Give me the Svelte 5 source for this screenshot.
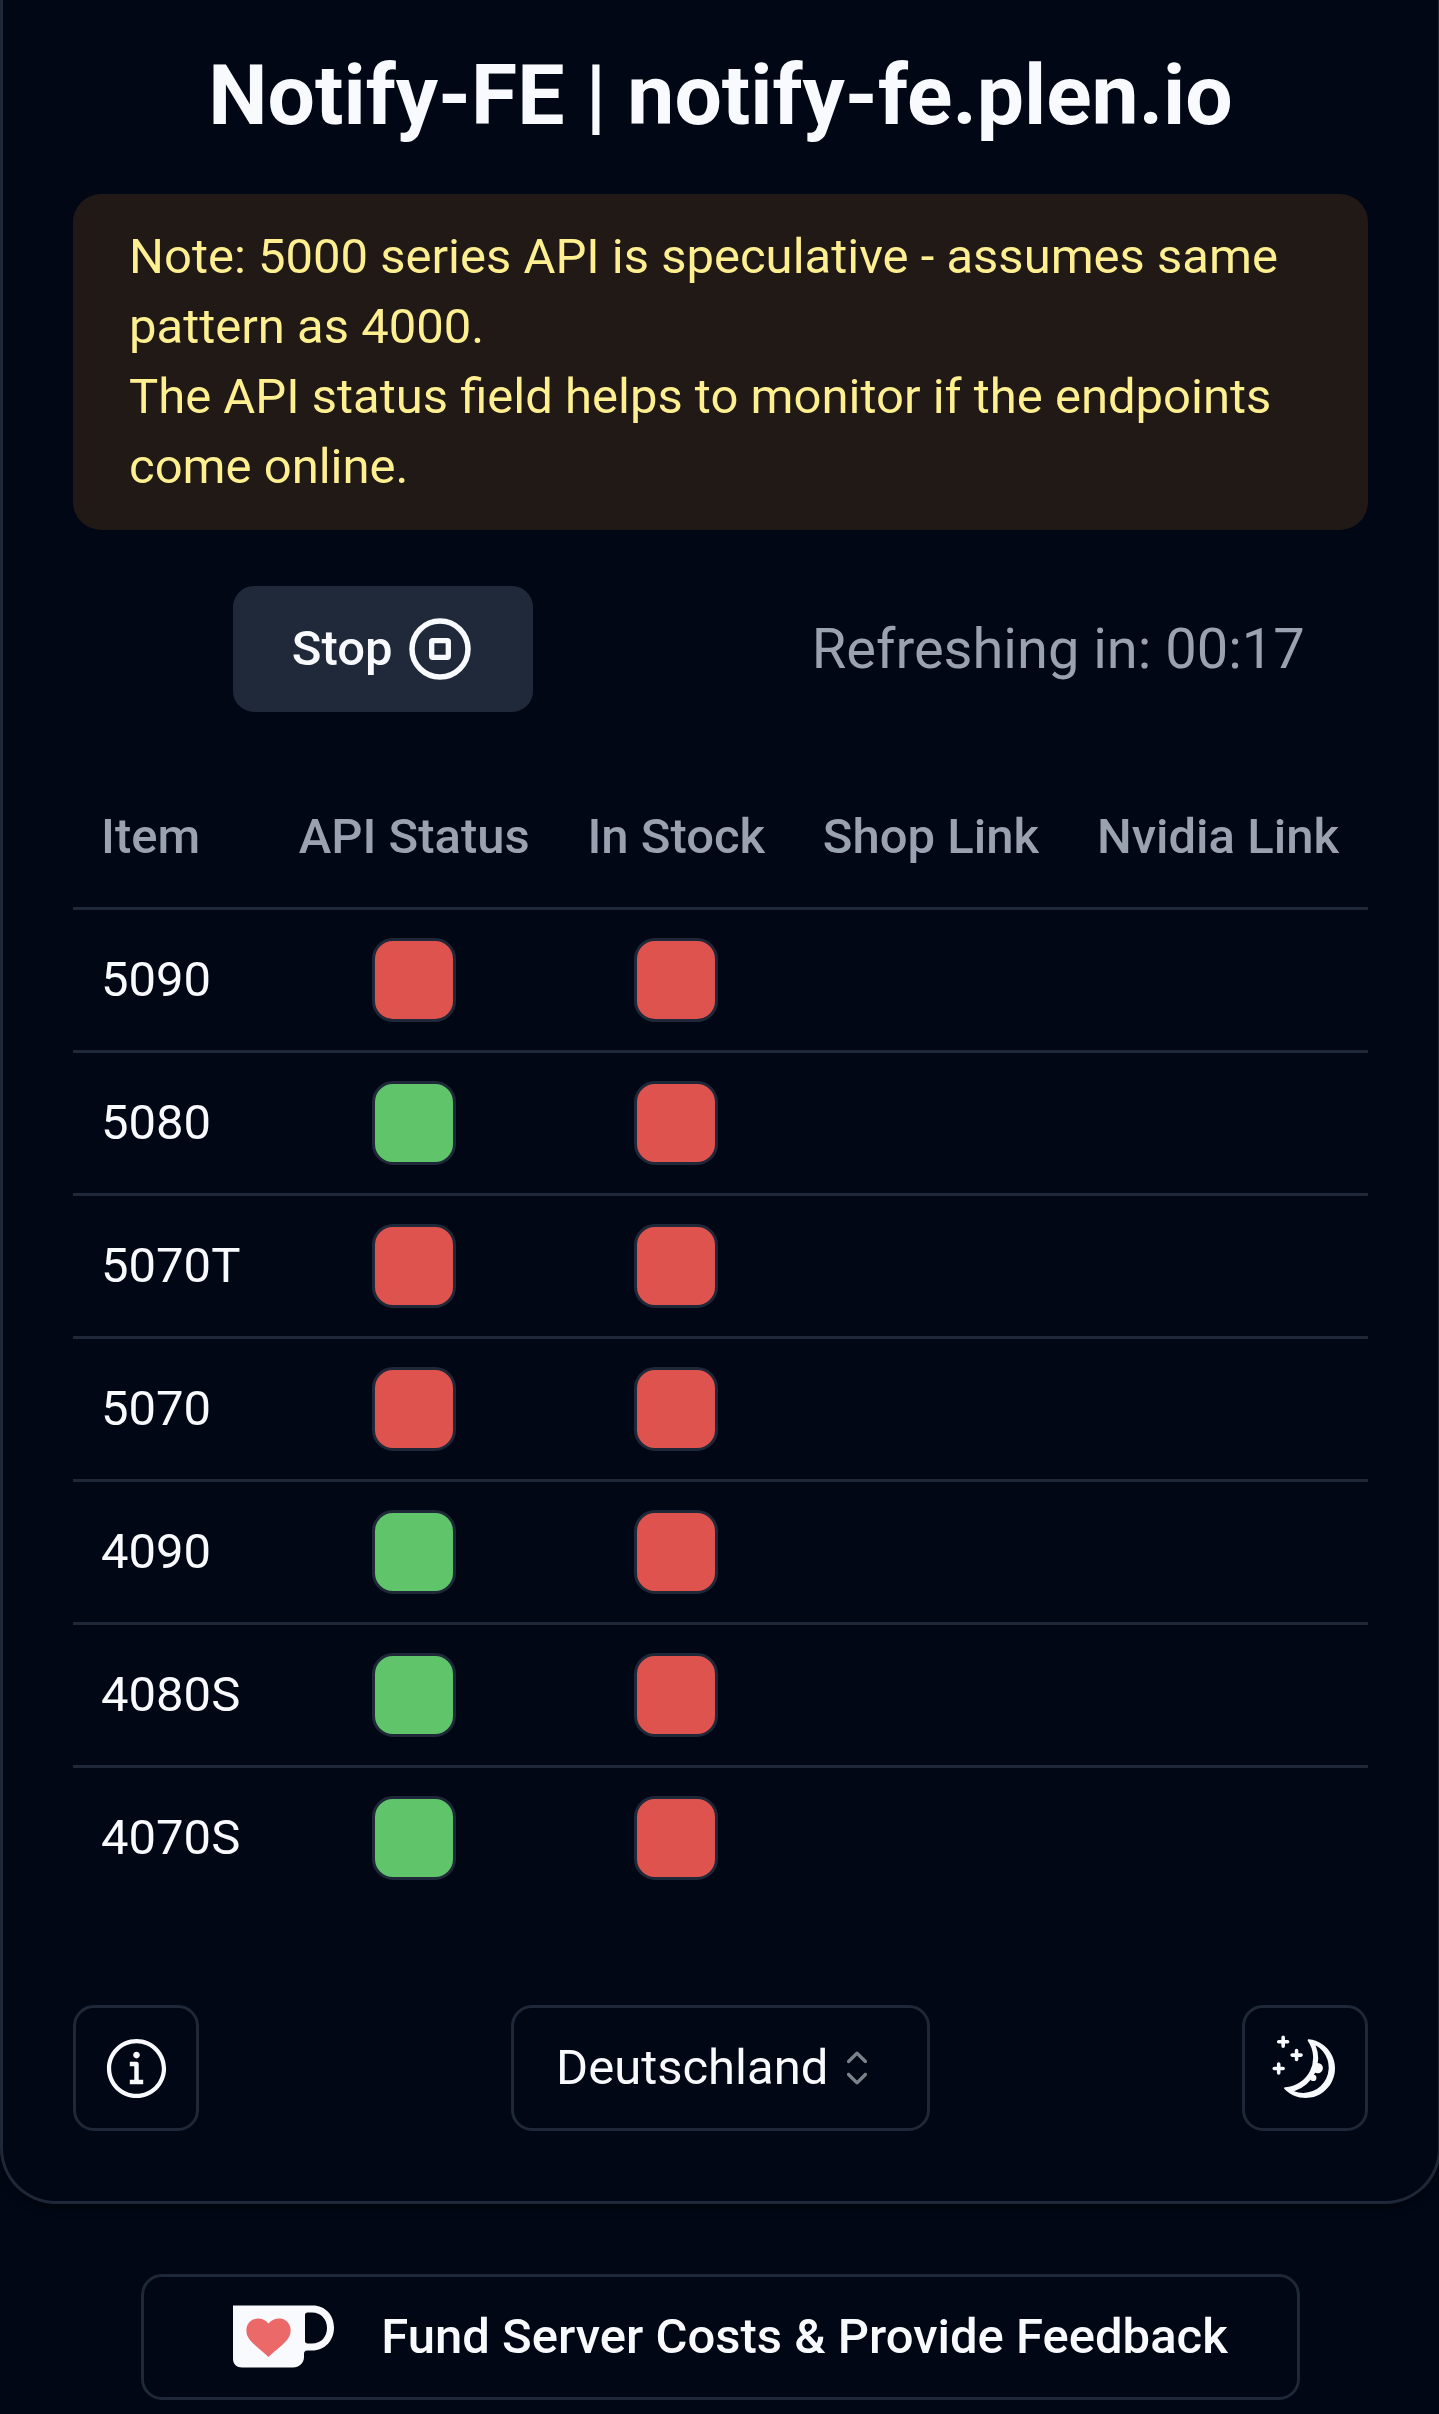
<script>
	let running = $state(true);
	let country = $state("de");
	let seconds = $state(17);

	const items = [
		{ name: "5090", api: false, stock: false },
		{ name: "5080", api: true, stock: false },
		{ name: "5070T", api: false, stock: false },
		{ name: "5070", api: false, stock: false },
		{ name: "4090", api: true, stock: false },
		{ name: "4080S", api: true, stock: false },
		{ name: "4070S", api: true, stock: false },
	];

	const toggleRunning = () => {
		running = !running;
	};
</script>

<svelte:head>
	<title>Notify-FE</title>
</svelte:head>

<div class="page">
	<main class="card">
		<h1>Notify-FE | notify-fe.plen.io</h1>

		<p class="note">
			Note: 5000 series API is speculative - assumes same pattern as 4000.<br />
			The API status field helps to monitor if the endpoints come online.
		</p>

		<div class="controls">
			<button class="toggle" onclick={toggleRunning}>
				{running ? "Stop" : "Start"}
				<svg viewBox="0 0 70 70" fill="none" stroke="currentColor" aria-hidden="true">
					<circle cx="35" cy="35" r="28" stroke-width="5.5" />
					{#if running}
						<rect x="26.7" y="26.7" width="16.6" height="16.6" rx="1" stroke-width="5.3" />
					{:else}
						<path d="M29 24L46 35L29 46Z" stroke-width="5.3" stroke-linejoin="round" />
					{/if}
				</svg>
			</button>
			<span class="countdown">Refreshing in: 00:{String(seconds).padStart(2, "0")}</span>
		</div>

		<table>
			<thead>
				<tr>
					<th class="name">Item</th>
					<th>API Status</th>
					<th>In Stock</th>
					<th>Shop Link</th>
					<th>Nvidia Link</th>
				</tr>
			</thead>
			<tbody>
				{#each items as item (item.name)}
					<tr>
						<td class="name">{item.name}</td>
						<td><div class="status" class:ok={item.api}></div></td>
						<td><div class="status" class:ok={item.stock}></div></td>
						<td></td>
						<td></td>
					</tr>
				{/each}
			</tbody>
		</table>

		<footer>
			<button class="icon-button" aria-label="Info">
				<svg viewBox="0 0 15 15" fill="currentColor" aria-hidden="true">
					<path
						fill-rule="evenodd"
						clip-rule="evenodd"
						d="M7.5 0.877C3.842 0.877 0.877 3.842 0.877 7.5C0.877 11.157 3.842 14.123 7.5 14.123C11.158 14.123 14.123 11.157 14.123 7.5C14.123 3.842 11.158 0.877 7.5 0.877ZM1.827 7.5C1.827 4.367 4.367 1.827 7.5 1.827C10.633 1.827 13.173 4.367 13.173 7.5C13.173 10.633 10.633 13.173 7.5 13.173C4.367 13.173 1.827 10.633 1.827 7.5ZM8.25 4.5C8.25 4.914 7.914 5.25 7.5 5.25C7.086 5.25 6.75 4.914 6.75 4.5C6.75 4.086 7.086 3.75 7.5 3.75C7.914 3.75 8.25 4.086 8.25 4.5ZM6 6H7.5C7.776 6 8 6.224 8 6.5V10H9V11H6V10H7V7H6V6Z"
					/>
				</svg>
			</button>

			<div class="select">
				<select bind:value={country} aria-label="Country">
					<option value="de">Deutschland</option>
				</select>
				<svg viewBox="0 0 15 15" fill="currentColor" aria-hidden="true">
					<path
						d="M4.932 5.432C4.756 5.608 4.756 5.892 4.932 6.068C5.108 6.244 5.392 6.244 5.568 6.068L7.5 4.136L9.432 6.068C9.608 6.244 9.892 6.244 10.068 6.068C10.244 5.892 10.244 5.608 10.068 5.432L7.818 3.182C7.734 3.097 7.619 3.05 7.5 3.05C7.381 3.05 7.266 3.097 7.182 3.182L4.932 5.432ZM10.068 9.568C10.244 9.392 10.244 9.108 10.068 8.932C9.892 8.756 9.608 8.756 9.432 8.932L7.5 10.864L5.568 8.932C5.392 8.756 5.108 8.756 4.932 8.932C4.756 9.108 4.756 9.392 4.932 9.568L7.182 11.818C7.358 11.994 7.642 11.994 7.818 11.818L10.068 9.568Z"
					/>
				</svg>
			</div>

			<button class="icon-button" aria-label="Toggle theme">
				<svg viewBox="0 0 15 15" fill="currentColor" aria-hidden="true">
					<path
						d="M2.5 0.5V2.5M1.5 1.5H3.5M5.5 3.5V5.5M4.5 4.5H6.5M1.5 6.5V8.5M0.5 7.5H2.5"
						stroke="currentColor"
						stroke-width="0.8"
						stroke-linecap="round"
					/>
					<path
						fill-rule="evenodd"
						d="M8.25 0.94A6.6 6.6 0 1 1 2.78 12.11C2.63 11.95 2.74 11.7 2.96 11.69A6.6 6.6 0 0 0 8.03 1.34C7.91 1.16 8.03 0.92 8.25 0.94ZM9.75 2.27A5.7 5.7 0 0 1 4.95 12.58A7.7 7.7 0 0 0 9.75 2.27Z"
					/>
					<circle cx="10.25" cy="7.4" r="1.15" />
					<circle cx="9.25" cy="9.6" r="0.7" />
				</svg>
			</button>
		</footer>
	</main>

	<a class="fund" href="#fund">
		<svg viewBox="0 0 140 84" aria-hidden="true">
			<path
				fill="#f9fafd"
				fill-rule="evenodd"
				d="M20 10.500H100C112 10.500 121 20 121 32.500C121 45.500 112 55.500 99 55.500H94C92 55.500 91 57 91 59V62C91 68 86 72.500 80 72.500H29C24 72.500 20 69 20 64ZM92 20V46C92 47.500 93 48.500 94.500 48.500H99C108 48.500 114 42 114 33C114 24 108 17.500 99 17.500H94.500C93 17.500 92 18.500 92 20Z"
			/>
			<path
				fill="#ec696a"
				d="M55.500 28.500C60 23 67 22.500 72 25C78 28.500 79 36 76 42C73 48 64 54 55.500 62C47 54 38 48 35 42C32 36 33 28.500 39 25C44 22.500 51 23 55.500 28.500Z"
			/>
		</svg>
		Fund Server Costs &amp; Provide Feedback
	</a>
</div>

<style>
	:global(body) {
		overflow-x: hidden;
		background: #010714;
	}

	.page {
		--border: #1f2838;
		--text: #f9fafd;
		--muted: #9aa2b1;

		display: flex;
		flex-direction: column;
		align-items: center;
		gap: 70px;
		width: calc(100% + 2px);
		padding-bottom: 14px;
		font-family: Roboto, sans-serif;
		font-size: 49px;
		line-height: 70px;
		color: var(--text);
	}

	.card {
		box-sizing: border-box;
		width: 100%;
		padding: 54px 70px 70px;
		border: 3px solid var(--border);
		border-top: 0;
		border-radius: 0 0 56px 56px;
		box-shadow: 0 4px 10px rgba(0, 0, 0, 0.3);
	}

	h1 {
		margin: 0 0 56px;
		font-size: 84px;
		font-weight: 700;
		line-height: 84px;
		text-align: center;
	}

	.note {
		margin: 0 0 56px;
		padding: 28px 56px;
		border-radius: 28px;
		background: #211916;
		color: #feef91;
	}

	.controls {
		display: grid;
		grid-template-columns: 1fr 1fr;
		gap: 56px;
		align-items: center;
		justify-items: center;
		margin-bottom: 55px;
	}

	button,
	select {
		box-sizing: border-box;
		height: 126px;
		margin: 0;
		border: 3px solid var(--border);
		border-radius: 21px;
		background: transparent;
		color: inherit;
		font: inherit;
		cursor: pointer;
	}

	.toggle {
		display: flex;
		align-items: center;
		gap: 12px;
		padding: 0 55px 0 56px;
		border-color: #202939;
		background: #202939;
		font-weight: 500;
	}

	.toggle svg {
		width: 70px;
		height: 70px;
	}

	.countdown {
		font-size: 56px;
		color: var(--muted);
		white-space: nowrap;
	}

	table {
		width: 100%;
		margin-bottom: 97px;
		border-collapse: separate;
		border-spacing: 0;
	}

	th {
		height: 140px;
		padding: 0 28px;
		border-bottom: 3px solid var(--border);
		font-weight: 500;
		color: var(--muted);
		white-space: nowrap;
	}

	td {
		padding: 28px;
		border-bottom: 3px solid var(--border);
	}

	.name {
		text-align: left;
	}

	tbody tr:last-child td {
		border-bottom: 0;
	}

	.status {
		box-sizing: border-box;
		width: 84px;
		height: 84px;
		margin: 0 auto;
		border: 3px solid var(--border);
		border-radius: 21px;
		background: #de534d;
	}

	.status.ok {
		background: #5fc46a;
	}

	footer {
		display: flex;
		align-items: center;
		justify-content: space-between;
	}

	.icon-button {
		display: flex;
		align-items: center;
		justify-content: center;
		width: 126px;
		padding: 0;
	}

	.icon-button svg {
		width: 67px;
		height: 67px;
	}

	.select {
		position: relative;
	}

	.select select {
		display: block;
		padding: 0 98px 0 42px;
		appearance: none;
	}

	.select svg {
		position: absolute;
		top: 35px;
		right: 45px;
		width: 56px;
		height: 56px;
		opacity: 0.5;
		pointer-events: none;
	}

	.select option {
		background: #010714;
	}

	.fund {
		display: flex;
		align-items: center;
		gap: 28px;
		box-sizing: border-box;
		height: 126px;
		padding: 0 69px;
		border: 3px solid var(--border);
		border-radius: 21px;
		color: inherit;
		font-weight: 500;
		text-decoration: none;
		white-space: nowrap;
	}

	.fund svg {
		width: 140px;
		height: 84px;
	}
</style>
